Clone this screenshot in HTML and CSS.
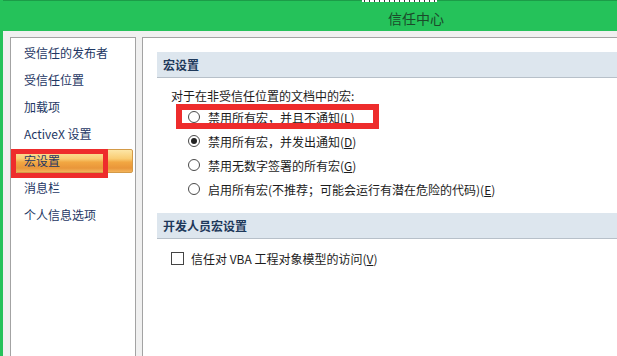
FILE: index.html
```html
<!DOCTYPE html>
<html lang="zh-CN">

<head>
  <meta charset="UTF-8">
  <meta name="viewport" content="width=device-width, initial-scale=1.0">
  <title>信任中心</title>
  <link rel="stylesheet" href="styles.css">
</head>

<body>
  <div class="window">
    <div class="titlebar">
      <div class="peek"></div>
      <span class="title">信任中心</span>
    </div>

    <div class="content">
      <ul class="nav">
        <li>受信任的发布者</li>
        <li>受信任位置</li>
        <li>加载项</li>
        <li>ActiveX 设置</li>
        <li class="active">宏设置<span class="mark nav-mark"></span></li>
        <li>消息栏</li>
        <li>个人信息选项</li>
      </ul>

      <div class="panel">
        <div class="section-head">宏设置</div>
        <p class="intro">对于在非受信任位置的文档中的宏:</p>
        <div class="options">
          <label class="opt"><span class="radio"></span>禁用所有宏，并且不通知(<u>L</u>)<span class="mark opt-mark"></span></label>
          <label class="opt"><span class="radio on"></span>禁用所有宏，并发出通知(<u>D</u>)</label>
          <label class="opt"><span class="radio"></span>禁用无数字签署的所有宏(<u>G</u>)</label>
          <label class="opt"><span class="radio"></span>启用所有宏(不推荐；可能会运行有潜在危险的代码)(<u>E</u>)</label>
        </div>

        <div class="section-head dev">开发人员宏设置</div>
        <label class="check"><span class="box"></span>信任对 VBA 工程对象模型的访问(<u>V</u>)</label>
      </div>
    </div>
  </div>
</body>

</html>
```

FILE: styles.css
```css
html,
body {
  margin: 0;
  padding: 0;
}

body {
  width: 617px;
  height: 356px;
  overflow: hidden;
  background-color: #f0f0f0;
  font-family: "Noto Sans CJK SC", "Microsoft YaHei", sans-serif;
  font-size: 12px;
  color: #1c1c1c;
}

.window {
  border-left: 3px solid #25c25a;
  height: 356px;
}

/* title bar */
.titlebar {
  position: relative;
  height: 31px;
  box-sizing: border-box;
  background-color: #25c25a;
  border-top: 1px solid #1c9c48;
  padding: 4px 0 0 385px;
  display: flex;
  align-items: center;
}

.title {
  font-size: 14px;
  line-height: 16px;
  color: #1b4a2a;
}

/* bottom edge of the window behind, just peeking out */
.peek {
  position: absolute;
  left: 359px;
  top: -1px;
  width: 75px;
  height: 2px;
  background: repeating-linear-gradient(90deg, #fff 0, #fff 2px, #3a3a3a 2px, #3a3a3a 3px, #fff 3px, #fff 5px);
}

/* main area */
.content {
  display: flex;
  gap: 6px;
  padding: 6px 0 0 7px;
}

.nav {
  list-style: none;
  margin: 0;
  padding: 1px 0 0;
  width: 124px;
  height: 330px;
  flex: none;
  background-color: #fff;
  border: 1px solid #a3a3a3;
}

.nav li {
  position: relative;
  height: 27px;
  line-height: 27px;
  margin: 0 2px 0 4px;
  padding-left: 9px;
  color: #1e3764;
}

.nav li.active {
  height: 22px;
  line-height: 22px;
  margin-top: 2px;
  margin-bottom: 1px;
  padding-left: 8px;
  border: 1px solid #d39a48;
  border-radius: 2px;
  background: linear-gradient(#fde6a6 0%, #f9cc72 40%, #f2a742 55%, #e9963a 82%, #f3b45a 100%);
}

.mark {
  position: absolute;
  box-sizing: border-box;
  border: 6px solid #ee2c2c;
}

.nav-mark {
  left: -5px;
  top: -1px;
  width: 97px;
  height: 29px;
  border-width: 5px;
}

.panel {
  flex: 1;
  height: 330px;
  box-sizing: border-box;
  padding: 14px 0 0 14px;
  background-color: #fff;
  border: 1px solid #a3a3a3;
  border-right: none;
}

.section-head {
  height: 25px;
  line-height: 25px;
  padding-left: 6px;
  background-color: #dde6ee;
  border-bottom: 1px solid #b7c0c9;
  font-weight: bold;
  color: #1e395b;
}

.section-head.dev {
  margin-top: 12px;
}

.intro {
  margin: 9px 0 0 14px;
  line-height: 18px;
}

.options {
  margin-left: 31px;
}

.opt {
  position: relative;
  display: flex;
  align-items: center;
  height: 24px;
}

.radio {
  width: 12px;
  height: 12px;
  box-sizing: border-box;
  border: 1px solid #4a4a4a;
  border-radius: 50%;
  background-color: #fff;
  margin-right: 8px;
  display: flex;
  align-items: center;
  justify-content: center;
}

.radio.on::after {
  content: "";
  width: 6px;
  height: 6px;
  border-radius: 50%;
  background-color: #222;
}

.opt-mark {
  left: -12px;
  top: -1px;
  width: 203px;
  height: 25px;
}

.check {
  display: flex;
  align-items: center;
  height: 20px;
  margin: 9px 0 0 14px;
}

.box {
  width: 13px;
  height: 13px;
  box-sizing: border-box;
  border: 1px solid #444;
  background-color: #fff;
  margin-right: 7px;
}
```
